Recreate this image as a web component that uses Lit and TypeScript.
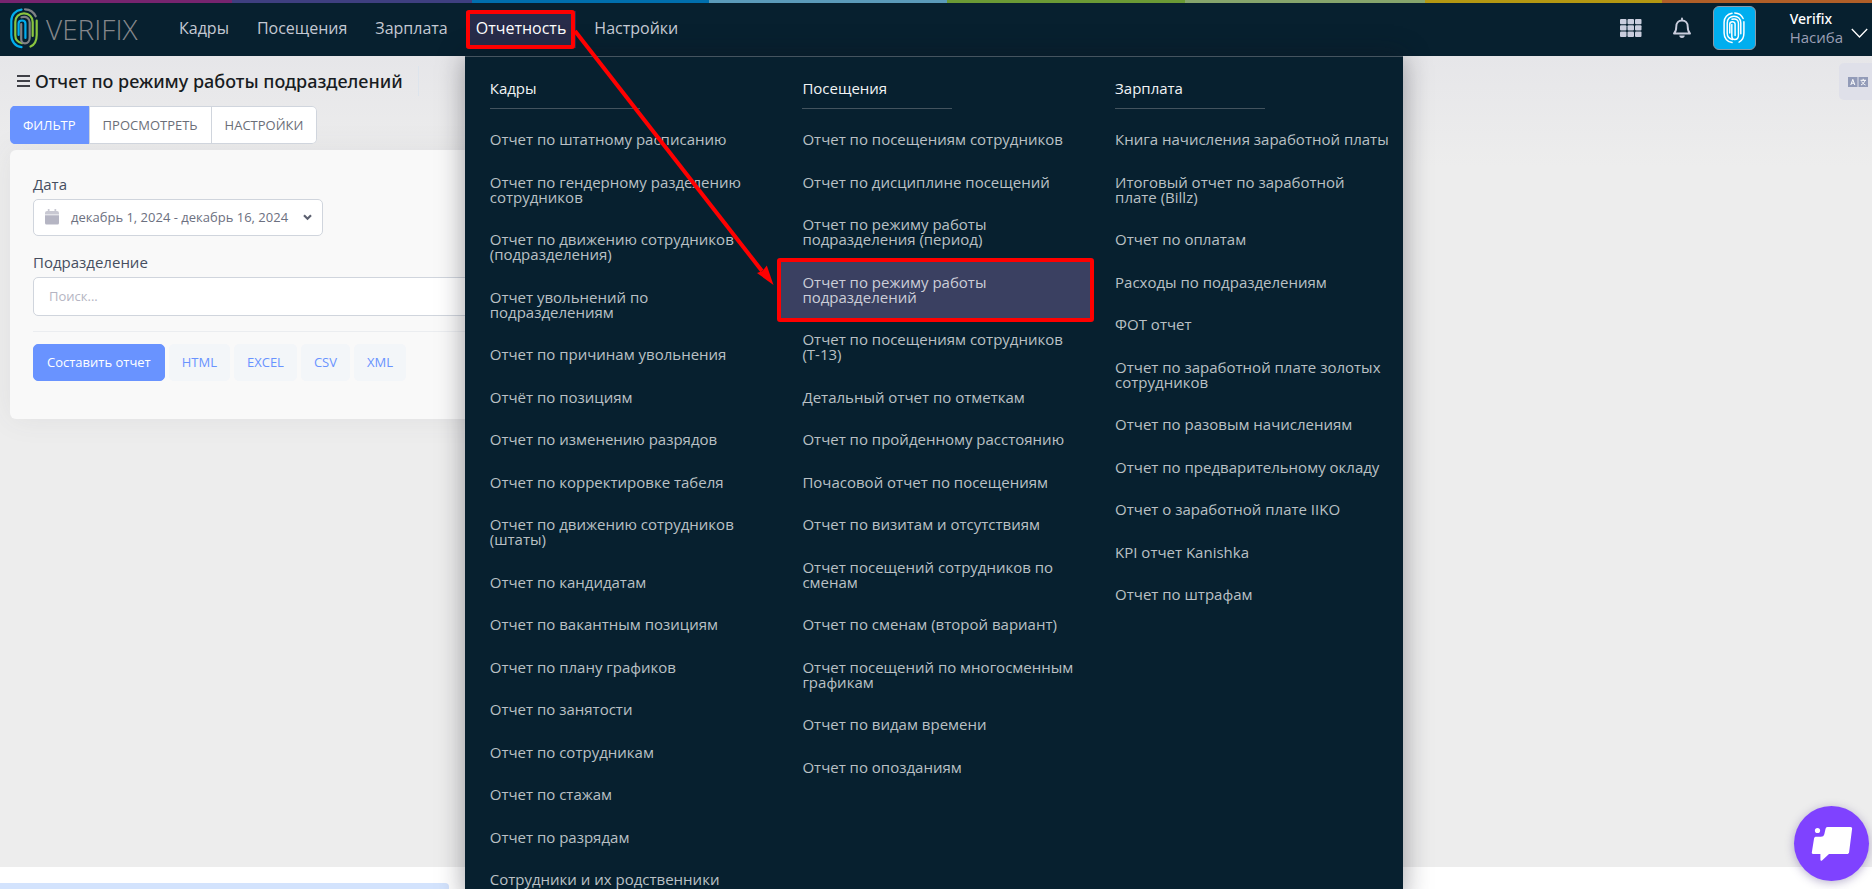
import { LitElement, html, css, svg } from "lit";
import { customElement, property } from "lit/decorators.js";
import { classMap } from "lit/directives/class-map.js";

interface MenuColumn {
  title: string;
  items: string[];
}

const NAV = ["Кадры", "Посещения", "Зарплата", "Отчетность", "Настройки"];
const OPEN_SECTION = "Отчетность";
const CURRENT_REPORT = "Отчет по режиму работы подразделений";

const COLUMNS: MenuColumn[] = [
  {
    title: "Кадры",
    items: [
      "Отчет по штатному расписанию",
      "Отчет по гендерному разделению сотрудников",
      "Отчет по движению сотрудников (подразделения)",
      "Отчет увольнений по подразделениям",
      "Отчет по причинам увольнения",
      "Отчёт по позициям",
      "Отчет по изменению разрядов",
      "Отчет по корректировке табеля",
      "Отчет по движению сотрудников (штаты)",
      "Отчет по кандидатам",
      "Отчет по вакантным позициям",
      "Отчет по плану графиков",
      "Отчет по занятости",
      "Отчет по сотрудникам",
      "Отчет по стажам",
      "Отчет по разрядам",
      "Сотрудники и их родственники",
    ],
  },
  {
    title: "Посещения",
    items: [
      "Отчет по посещениям сотрудников",
      "Отчет по дисциплине посещений",
      "Отчет по режиму работы подразделения (период)",
      CURRENT_REPORT,
      "Отчет по посещениям сотрудников (Т-13)",
      "Детальный отчет по отметкам",
      "Отчет по пройденному расстоянию",
      "Почасовой отчет по посещениям",
      "Отчет по визитам и отсутствиям",
      "Отчет посещений сотрудников по сменам",
      "Отчет по сменам (второй вариант)",
      "Отчет посещений по многосменным графикам",
      "Отчет по видам времени",
      "Отчет по опозданиям",
    ],
  },
  {
    title: "Зарплата",
    items: [
      "Книга начисления заработной платы",
      "Итоговый отчет по заработной плате (Billz)",
      "Отчет по оплатам",
      "Расходы по подразделениям",
      "ФОТ отчет",
      "Отчет по заработной плате золотых сотрудников",
      "Отчет по разовым начислениям",
      "Отчет по предварительному окладу",
      "Отчет о заработной плате IIKO",
      "KPI отчет Kanishka",
      "Отчет по штрафам",
    ],
  },
];

const fingerprint = (a: string, b: string, c: string, width: number) => svg`
  <g fill="none" stroke-width=${width} stroke-linecap="round">
    <path stroke=${a} d="M11.5 1.6C5.500 2.400 1.300 7 1.300 13v14c0 6.500 4 11.500 10.200 12.200"/>
    <path stroke=${c} d="M15 1.300c5 .2 8.800 2.800 10.700 7"/>
    <path stroke=${b} d="M26.700 12.500V27c0 6-2.800 10-6.200 11.600"/>
    <path stroke=${b} d="M12 35.200c-4-1-6.700-4-6.700-8V14c0-5 3.700-8.700 8.700-8.700s8.700 3.700 8.700 8.700v14"/>
    <path stroke=${c} d="M11.500 9.300c5-1.600 8.200 1.200 8.200 5.200v15c0 3.500-2 5.800-4.700 5.800s-3.800-1.800-3.800-4.300V16"/>
    <path stroke=${a} d="M8.600 27V15.500c0-4 6.800-4 6.800 0V30"/>
  </g>`;

@customElement("reports-menu")
export class ReportsMenu extends LitElement {
  @property({ attribute: false }) columns: MenuColumn[] = [];
  @property() current = "";

  static styles = css`
    :host {
      display: grid;
      grid-template-columns: repeat(3, 1fr);
      align-items: start;
      box-sizing: border-box;
      padding-top: 21px;
      border-top: 1px solid #45545f;
      background: #07202f;
      box-shadow: 0 0 26px rgba(20, 20, 30, 0.4);
      font-size: 15px;
    }
    .title {
      margin: 0 25px 9px;
      font: inherit;
      line-height: 20px;
      color: #f2f4f5;
    }
    .title::after {
      content: "";
      display: block;
      width: 150px;
      height: 1px;
      margin-top: 10px;
      background: #43535e;
    }
    .list {
      margin: 0;
      padding: 0;
      list-style: none;
    }
    .item:nth-child(odd) {
      margin-bottom: 1px;
    }
    .link {
      display: block;
      padding: 14px 13px 13px 25px;
      line-height: 15px;
      color: #bac0c5;
      text-decoration: none;
    }
    .current {
      background: #3a4061;
      color: #ccced8;
    }
  `;

  render() {
    return this.columns.map(
      (col) => html`
        <section>
          <h2 class="title">${col.title}</h2>
          <ul class="list">
            ${col.items.map(
              (item) => html`<li class="item">
                <a href="#" class=${classMap({ link: true, current: item === this.current })}>${item}</a>
              </li>`
            )}
          </ul>
        </section>
      `
    );
  }
}

@customElement("app-header")
export class AppHeader extends LitElement {
  static styles = css`
    :host {
      display: block;
      position: relative;
      z-index: 2;
      background: #07202f;
    }
    .stripe {
      height: 3px;
      background: linear-gradient(
        90deg,
        #76246f 0 12.4%,
        #3e3f80 0 25.2%,
        #006fae 0 37.9%,
        #5b9bba 0 50.6%,
        #6b9a35 0 63.3%,
        #86a56c 0 76.1%,
        #b39712 0 88.8%,
        #b05f28 0
      );
    }
    .bar {
      display: flex;
      align-items: center;
      height: 53px;
      padding: 0 4px 0 10px;
    }
    .logo {
      display: flex;
      align-items: center;
      gap: 8px;
      flex: 0 0 159px;
      margin-bottom: 2px;
      color: #85878b;
      font-size: 28px;
      font-weight: 300;
      line-height: 40px;
      text-decoration: none;
    }
    .nav {
      display: flex;
      gap: 8px;
      margin-right: auto;
    }
    .entry {
      position: relative;
    }
    .navlink {
      display: block;
      margin: 8px 0 8px;
      padding: 5px 10px 8px;
      font-size: 16px;
      line-height: 24px;
      color: #c4c9d3;
      text-decoration: none;
    }
    .open {
      background: #282c4a;
      color: #fff;
    }
    .menu {
      position: absolute;
      top: 53px;
      left: -1px;
      width: 50vw;
      min-width: 938px;
      min-height: calc(100vh - 56px);
    }
    .tools {
      display: flex;
      align-items: center;
      margin-bottom: 4px;
    }
    .icon,
    .avatar,
    .user {
      padding: 0;
      border: 0;
      background: none;
      font: inherit;
      text-align: left;
      color: #c9cddd;
    }
    .icon {
      display: flex;
      margin-right: 30px;
    }
    .bell {
      margin-right: 21px;
    }
    .avatar {
      display: grid;
      place-items: center;
      width: 43px;
      height: 44px;
      margin-right: 34px;
      border: 1px solid #8d99a6;
      border-radius: 6px;
      background: #00aeef;
    }
    .user {
      display: flex;
      align-items: flex-end;
      gap: 8px;
      font-size: 15px;
      line-height: 19px;
      color: #9a9eb4;
    }
    .company {
      display: block;
      font-size: 14px;
      font-family: "Noto Sans", sans-serif;
      font-weight: 500;
      color: #fff;
    }
    .chevron {
      margin-bottom: 9px;
    }
  `;

  render() {
    return html`
      <div class="stripe"></div>
      <div class="bar">
        <a class="logo" href="#" aria-label="Verifix">
          <svg width="28" height="41" viewBox="0 0 28 41">${fingerprint("#00adee", "#8bc53f", "#808285", 2.2)}</svg>
          <span>VERIFIX</span>
        </a>
        <nav class="nav">
          ${NAV.map((label) => {
            const open = label === OPEN_SECTION;
            return html`<div class="entry">
              <a href="#" class=${classMap({ navlink: true, open })}>${label}</a>
              ${open
                ? html`<reports-menu class="menu" .columns=${COLUMNS} current=${CURRENT_REPORT}></reports-menu>`
                : ""}
            </div>`;
          })}
        </nav>
        <div class="tools">
          <button class="icon" aria-label="Приложения">
            <svg width="22" height="18" viewBox="0 0 22 18" fill="#c9cddd">
              ${[0, 1, 2].map((r) =>
                [0, 1, 2].map(
                  (c) => svg`<rect x=${c * 7.5} y=${r * 6.3} width="6.5" height="5.300" rx="1"/>`
                )
              )}
            </svg>
          </button>
          <button class="icon bell" aria-label="Уведомления">
            <svg width="20" height="22" viewBox="0 0 20 22">
              <path
                d="M10 1.500v1.500M2 16.500c2-2 2.300-3.500 2.300-7C4.300 6 6.500 3.500 10 3.500s5.700 2.500 5.700 6c0 3.500.3 5 2.300 7z"
                fill="none" stroke="#c9cddd" stroke-width="1.900" stroke-linecap="round" stroke-linejoin="round"
              />
              <path d="M7.300 18.600h5.400a2.700 2.300 0 0 1-5.400 0z" fill="#c9cddd" />
            </svg>
          </button>
          <button class="avatar" aria-label="Профиль">
            <svg width="22" height="32" viewBox="0 0 28 41">${fingerprint("#fff", "#fff", "#fff", 1.9)}</svg>
          </button>
          <button class="user">
            <span><span class="company">Verifix</span>Насиба</span>
            <svg class="chevron" width="17" height="10" viewBox="0 0 17 10">
              <path d="M.8 1l7.700 8 7.700-8" fill="none" stroke="#fff" stroke-width="1.300" />
            </svg>
          </button>
        </div>
      </div>
    `;
  }
}

@customElement("app-root")
export class AppRoot extends LitElement {
  static styles = css`
    :host {
      display: flex;
      flex-direction: column;
      position: relative;
      height: 100vh;
      overflow: hidden;
      background: #ededed;
      font-family: "Open Sans", "Noto Sans", sans-serif;
      font-size: 13px;
      color: #212529;
    }
    .page {
      flex: 1;
      padding: 10px;
      background: linear-gradient(#e6e6e9, #ededed 110px);
    }
    .heading {
      display: flex;
      align-items: center;
      gap: 5px;
      width: fit-content;
      height: 30px;
      padding: 0 15px 0 7px;
      border-right: 1px solid #dde4ec;
      margin-bottom: 10px;
    }
    .title {
      margin: 0;
      font: 500 18px/30px "Noto Sans", sans-serif;
      color: #181c22;
    }
    .tabs {
      display: flex;
      width: fit-content;
      overflow: hidden;
      border-radius: 5px;
    }
    .tab,
    .btn,
    .date,
    .search {
      box-sizing: border-box;
      height: 37px;
      border: 1px solid #d0d5dd;
      border-radius: 5px;
      background: #fff;
      font: inherit;
      color: #6c7080;
    }
    .tab {
      height: 38px;
      padding: 0 13px 1px;
      border-radius: 0;
      border-left-width: 0;
      color: #6b6e78;
    }
    .tab:last-child {
      border-radius: 0 5px 5px 0;
    }
    .selected {
      border-color: #6993ff;
      border-right-width: 0;
      background: #6993ff;
      color: #fff;
    }
    .tab.selected + .tab {
      border-left-width: 1px;
    }
    .card {
      box-sizing: border-box;
      width: 50%;
      margin-top: 6px;
      padding: 24px 23px 38px;
      border-radius: 6px;
      background: #f9f9f9;
      box-shadow: 0 0 30px rgba(80, 80, 90, 0.08);
    }
    .label {
      display: block;
      margin-bottom: 5px;
      font-size: 15px;
      line-height: 20px;
      color: #464e5f;
    }
    .date {
      display: flex;
      align-items: center;
      width: 290px;
      padding: 0 10px 1px 11px;
      margin-bottom: 16px;
    }
    .period {
      margin: 0 auto 0 12px;
    }
    .search {
      width: 100%;
      height: 39px;
      padding: 0 15px 1px;
    }
    .search::placeholder {
      color: #b5b5c3;
      opacity: 1;
    }
    .actions {
      display: flex;
      gap: 4px;
      margin-top: 15px;
      padding-top: 12px;
      border-top: 1px solid #ebedf0;
    }
    .btn {
      padding: 0 12px 2px;
      border-color: #f3f6f9;
      background: #f3f6f9;
      color: #6993ff;
    }
    .primary {
      padding: 0 13px 2px;
      border-color: #6993ff;
      background: #6993ff;
      color: #fff;
    }
    .footer {
      height: 22px;
      background: #fff;
    }
    .status {
      position: absolute;
      left: 0;
      bottom: 0;
      width: 449px;
      height: 6px;
      border-radius: 0 4px 0 0;
      background: #d3e3fd;
    }
    .lang {
      position: absolute;
      top: 63px;
      right: 0;
      display: flex;
      align-items: center;
      width: 33px;
      height: 37px;
      padding: 0 0 0 9px;
      border: 0;
      border-radius: 5px 0 0 5px;
      background: #dfe0e9;
    }
    .chat {
      position: absolute;
      right: 3px;
      bottom: 8px;
      z-index: 3;
      display: grid;
      place-items: center;
      width: 75px;
      height: 75px;
      padding: 0;
      border: 0;
      border-radius: 50%;
      background: #7f42ff;
      box-shadow: 0 2px 10px rgba(60, 40, 120, 0.35);
    }
    .callout {
      position: absolute;
      top: 0;
      left: 0;
      z-index: 4;
      pointer-events: none;
    }
  `;

  render() {
    return html`
      <app-header></app-header>
      <main class="page">
        <div class="heading">
          <svg width="13" height="14" viewBox="0 0 13 14">
            <path d="M0 2h13M0 7h13M0 12h13" stroke="#3f4047" stroke-width="2" />
          </svg>
          <h1 class="title">Отчет по режиму работы подразделений</h1>
        </div>
        <div class="tabs">
          <button class="tab selected">ФИЛЬТР</button>
          <button class="tab">ПРОСМОТРЕТЬ</button>
          <button class="tab">НАСТРОЙКИ</button>
        </div>
        <form class="card">
          <label class="label" for="period">Дата</label>
          <button class="date" id="period" type="button">
            <svg width="14" height="16" viewBox="0 0 14 16" fill="#b5b5c3">
              <path d="M2.800 0h1.700v2h5V0h1.700v2H12a2 2 0 0 1 2 2v1.500H0V4a2 2 0 0 1 2-2h.8z" opacity=".75" />
              <path d="M0 6.200h14V14a1.500 1.500 0 0 1-1.500 1.500h-11A1.500 1.500 0 0 1 0 14z" />
            </svg>
            <span class="period">декабрь 1, 2024 - декабрь 16, 2024</span>
            <svg width="9" height="7" viewBox="0 0 9 7">
              <path d="M1 1.300l3.500 3.500L8 1.300" fill="none" stroke="#5c6070" stroke-width="2.200" />
            </svg>
          </button>
          <label class="label" for="division">Подразделение</label>
          <input class="search" id="division" type="text" placeholder="Поиск..." />
          <div class="actions">
            <button class="btn primary" type="button">Составить отчет</button>
            ${["HTML", "EXCEL", "CSV", "XML"].map(
              (kind) => html`<button class="btn" type="button">${kind}</button>`
            )}
          </div>
        </form>
      </main>
      <footer class="footer"></footer>
      <div class="status"></div>
      <button class="lang" aria-label="Язык">
        <svg width="20" height="10" viewBox="0 0 20 10">
          <path d="M0 0h9.500v10H0zM10.500 0H20v10h-9.500z" fill="#929bb8" />
          <path
            d="M2.800 8l2-5.600L6.800 8M3.500 6.200h2.600M12.500 3.300h5.500M15.200 1.800v1.500M17 3.300c-.5 2-2 3.700-4 4.700M13.700 4.500c.8 1.700 2 2.800 3.800 3.500"
            fill="none" stroke="#fff" stroke-width="1"
          />
        </svg>
      </button>
      <button class="chat" aria-label="Чат">
        <svg width="42" height="36" viewBox="0 0 42 36" fill="#fff">
          <circle cx="6.500" cy="4.500" r="2.600" />
          <path
            d="M16.500 1h23c1.200 0 1.700.8 1.600 1.800l-3 23.400c-.2 1.200-1 1.800-2.200 1.800H18l-7 6.400c-.8.6-1.600.3-1.600-.7V28H2c-.9 0-1.300-.6-1.200-1.400L3 12.800c.2-1.400 1-2 2.300-2h4.500c2 0 3-.8 3.500-2.500l1.200-5.300c.3-1.300.8-2 2-2z"
          />
        </svg>
      </button>
      <svg class="callout" width="1100" height="330" viewBox="0 0 1100 330" fill="none" stroke="#f00" stroke-width="4">
        <rect x="468" y="12" width="105" height="35" rx="1" />
        <rect x="779" y="260" width="313" height="60" rx="1" />
        <path d="M575 31l187 240" />
        <path d="M773.500 285l-16.500-12 5.500-2 4.300-5.500z" fill="#f00" stroke="none" />
      </svg>
    `;
  }
}
